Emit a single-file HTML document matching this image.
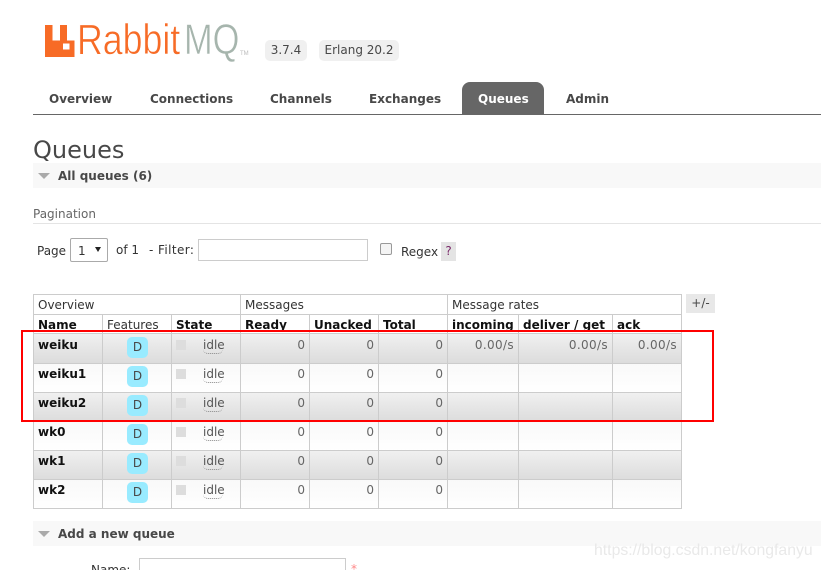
<!DOCTYPE html>
<html><head><meta charset="utf-8"><style>
html,body{margin:0;padding:0;background:#fff}
#p{position:relative;width:821px;height:570px;overflow:hidden;background:#fff;font-family:"DejaVu Sans",Verdana,sans-serif;font-size:12px;color:#484848}
#p div,#p span.a{position:absolute;white-space:nowrap}
.t{line-height:16px;height:16px;margin-top:1px}
.nav{top:90px;font-weight:bold;font-size:12px;color:#484848}
.b{font-weight:bold;color:#111}
.h{top:316px;font-size:12px;color:#111}
.h0{top:296px;color:#333}
.vl{width:1px;background:#ccc;top:314px;height:195px}
.hl{height:1px;background:#ccc;left:33px;width:649px}
.row{left:33px;width:649px;height:29px}
.o{background:linear-gradient(#f0f0f0,#dcdcdc)}
.e{background:linear-gradient(#f9f9f9,#fff)}
.d{left:127px;width:21px;height:21px;background:#99ebff;border-radius:5px;text-align:center;line-height:21px;font-size:12px;color:#484848}
.s{left:176px;width:10px;height:10px;background:#ddd}
.i{left:203px;width:20px;height:18px;padding-top:1px;line-height:16px;border-bottom:1px dotted #888;border-radius:0 0 5px 5px;box-sizing:border-box;color:#555}
.n{text-align:right;color:#666;line-height:16px;height:16px;margin-top:1px}
.r{letter-spacing:.35px}
.badge{background:#f0f0f0;border-radius:5px;top:40px;height:21px;line-height:21px;text-align:center;font-size:12px;color:#484848}
.bar{left:33px;width:788px;height:25px;background:#f8f8f8}
.tri{width:0;height:0;border-left:6px solid transparent;border-right:6px solid transparent;border-top:6px solid #aaa;left:38px}
</style></head><body><div id="p">

<svg style="position:absolute;left:45px;top:25px" width="30" height="32" viewBox="0 0 30 32"><path fill="#f76b26" fill-rule="evenodd" d="M0 0H7.500V15.500H15V0H22V15.500H29.500V32H0ZM18 18.500V24.500H24.500V18.500Z"/></svg>
<div style="left:77px;top:15px;font:43px/50px 'Liberation Sans',sans-serif;color:#f76b26;transform:scaleX(.83);transform-origin:0 0;-webkit-text-stroke:.6px #fff">Rabbit</div>
<div style="left:184px;top:15px;font:43px/50px 'Liberation Sans',sans-serif;color:#a6b5ad;transform:scaleX(.8);transform-origin:0 0;-webkit-text-stroke:.6px #fff">MQ</div>
<div style="left:240px;top:50px;font:6px/8px 'Liberation Sans',sans-serif;color:#bbb">TM</div>
<div class="badge" style="left:265px;width:42px">3.7.4</div>
<div class="badge" style="left:319px;width:80px">Erlang 20.2</div>

<div style="left:33px;top:114px;width:788px;height:1px;background:#666"></div>
<div style="left:462px;top:82px;width:82px;height:32px;background:#666;border-radius:8px 8px 0 0"></div>
<div class="nav t" style="left:49px">Overview</div>
<div class="nav t" style="left:150px">Connections</div>
<div class="nav t" style="left:270px">Channels</div>
<div class="nav t" style="left:369px">Exchanges</div>
<div class="nav t" style="left:478px;color:#fff">Queues</div>
<div class="nav t" style="left:566px">Admin</div>

<div style="left:33px;top:135px;font-size:24px;line-height:30px;color:#484848">Queues</div>
<div class="bar" style="top:163px"></div>
<div class="tri" style="top:173px"></div>
<div class="t" style="left:58px;top:167px;font-weight:bold;font-size:12px;color:#484848">All queues (6)</div>

<div class="t" style="left:33px;top:205px;color:#666">Pagination</div>
<div style="left:33px;top:223px;width:788px;height:1px;background:#e4e4e4"></div>
<div class="t" style="left:37px;top:242px;color:#333">Page</div>
<div style="left:70px;top:238px;width:38px;height:24px;box-sizing:border-box;border:1px solid #aaa;border-radius:2px;background:#fff"></div>
<div class="t" style="left:78px;top:242px;color:#333">1</div>
<div style="left:95px;top:247px;width:0;height:0;border-left:3.500px solid transparent;border-right:3.500px solid transparent;border-top:5px solid #222"></div>
<div class="t" style="left:116px;top:241px;color:#333">of 1</div>
<div class="t" style="left:149px;top:241px;color:#333;letter-spacing:.4px">- Filter:</div>
<div style="left:198px;top:239px;width:170px;height:22px;box-sizing:border-box;border:1px solid #ccc;background:#fff"></div>
<div style="left:380px;top:243px;width:12px;height:12px;box-sizing:border-box;border:1px solid #999;border-radius:2px;background:#f4f4f4"></div>
<div class="t" style="left:401px;top:243px;color:#333">Regex</div>
<div style="left:441px;top:242px;width:15px;height:19px;background:#e4e4e4;text-align:center;line-height:19px;color:#7a2a6a">?</div>

<!-- table -->
<div style="left:33px;top:294px;width:649px;height:1px;background:#ccc"></div>
<div class="hl" style="top:314px"></div>
<div class="row o" style="top:334px"></div>
<div class="row e" style="top:364px"></div>
<div class="row o" style="top:393px"></div>
<div class="row e" style="top:422px"></div>
<div class="row o" style="top:451px"></div>
<div class="row e" style="top:480px"></div>
<div class="hl" style="top:333px"></div>
<div class="hl" style="top:363px"></div>
<div class="hl" style="top:392px"></div>
<div class="hl" style="top:421px"></div>
<div class="hl" style="top:450px"></div>
<div class="hl" style="top:479px"></div>
<div class="hl" style="top:508px"></div>
<div class="vl" style="left:33px;top:294px;height:215px"></div>
<div class="vl" style="left:102px"></div>
<div class="vl" style="left:171px"></div>
<div class="vl" style="left:240px;top:294px;height:215px"></div>
<div class="vl" style="left:309px"></div>
<div class="vl" style="left:378px"></div>
<div class="vl" style="left:447px;top:294px;height:215px"></div>
<div class="vl" style="left:518px"></div>
<div class="vl" style="left:612px"></div>
<div class="vl" style="left:681px;top:294px;height:215px"></div>

<div class="t h0" style="left:38px">Overview</div>
<div class="t h0" style="left:245px">Messages</div>
<div class="t h0" style="left:452px">Message rates</div>
<div style="left:686px;top:294px;width:29px;height:19px;background:#e8e8e8;text-align:center;line-height:19px;color:#484848">+/-</div>

<div class="t h b" style="left:38px">Name</div>
<div class="t h" style="left:107px;color:#333">Features</div>
<div class="t h b" style="left:176px">State</div>
<div class="t h b" style="left:245px">Ready</div>
<div class="t h b" style="left:314px">Unacked</div>
<div class="t h b" style="left:383px">Total</div>
<div class="t h b" style="left:452px">incoming</div>
<div class="t h b" style="left:523px">deliver / get</div>
<div class="t h b" style="left:617px">ack</div>

<div class="t b" style="left:38px;top:336px">weiku</div>
<div class="t b" style="left:38px;top:365px">weiku1</div>
<div class="t b" style="left:38px;top:394px">weiku2</div>
<div class="t b" style="left:38px;top:423px">wk0</div>
<div class="t b" style="left:38px;top:452px">wk1</div>
<div class="t b" style="left:38px;top:481px">wk2</div>

<div class="d" style="top:337px">D</div><div class="d" style="top:366px">D</div><div class="d" style="top:395px">D</div><div class="d" style="top:424px">D</div><div class="d" style="top:453px">D</div><div class="d" style="top:482px">D</div>
<div class="s" style="top:340px"></div><div class="s" style="top:369px"></div><div class="s" style="top:398px"></div><div class="s" style="top:427px"></div><div class="s" style="top:456px"></div><div class="s" style="top:485px"></div>
<div class="i" style="top:336px">idle</div><div class="i" style="top:365px">idle</div><div class="i" style="top:394px">idle</div><div class="i" style="top:423px">idle</div><div class="i" style="top:452px">idle</div><div class="i" style="top:481px">idle</div>

<div class="n" style="left:245px;width:60px;top:336px">0</div><div class="n" style="left:314px;width:60px;top:336px">0</div><div class="n" style="left:383px;width:60px;top:336px">0</div>
<div class="n" style="left:245px;width:60px;top:365px">0</div><div class="n" style="left:314px;width:60px;top:365px">0</div><div class="n" style="left:383px;width:60px;top:365px">0</div>
<div class="n" style="left:245px;width:60px;top:394px">0</div><div class="n" style="left:314px;width:60px;top:394px">0</div><div class="n" style="left:383px;width:60px;top:394px">0</div>
<div class="n" style="left:245px;width:60px;top:423px">0</div><div class="n" style="left:314px;width:60px;top:423px">0</div><div class="n" style="left:383px;width:60px;top:423px">0</div>
<div class="n" style="left:245px;width:60px;top:452px">0</div><div class="n" style="left:314px;width:60px;top:452px">0</div><div class="n" style="left:383px;width:60px;top:452px">0</div>
<div class="n" style="left:245px;width:60px;top:481px">0</div><div class="n" style="left:314px;width:60px;top:481px">0</div><div class="n" style="left:383px;width:60px;top:481px">0</div>
<div class="n r" style="left:448px;width:66px;top:336px">0.00/s</div><div class="n r" style="left:519px;width:89px;top:336px">0.00/s</div><div class="n r" style="left:613px;width:64px;top:336px">0.00/s</div>

<div style="left:21px;top:330px;width:693px;height:92px;box-sizing:border-box;border:2px solid #f00"></div>

<div class="bar" style="top:521px"></div>
<div class="tri" style="top:531px"></div>
<div class="t" style="left:58px;top:525px;font-weight:bold;font-size:12px;color:#484848">Add a new queue</div>
<div class="t" style="left:91px;top:561px;color:#333">Name:</div>
<div style="left:139px;top:558px;width:207px;height:24px;box-sizing:border-box;border:1px solid #ccc;background:#fff"></div>
<div class="t" style="left:351px;top:560px;color:#f88">*</div>

<div style="left:594px;top:542px;font:15.800px/18px 'Liberation Sans',sans-serif;color:#e9e9e9">https://blog.csdn.net/kongfanyu</div>
</div></body></html>
